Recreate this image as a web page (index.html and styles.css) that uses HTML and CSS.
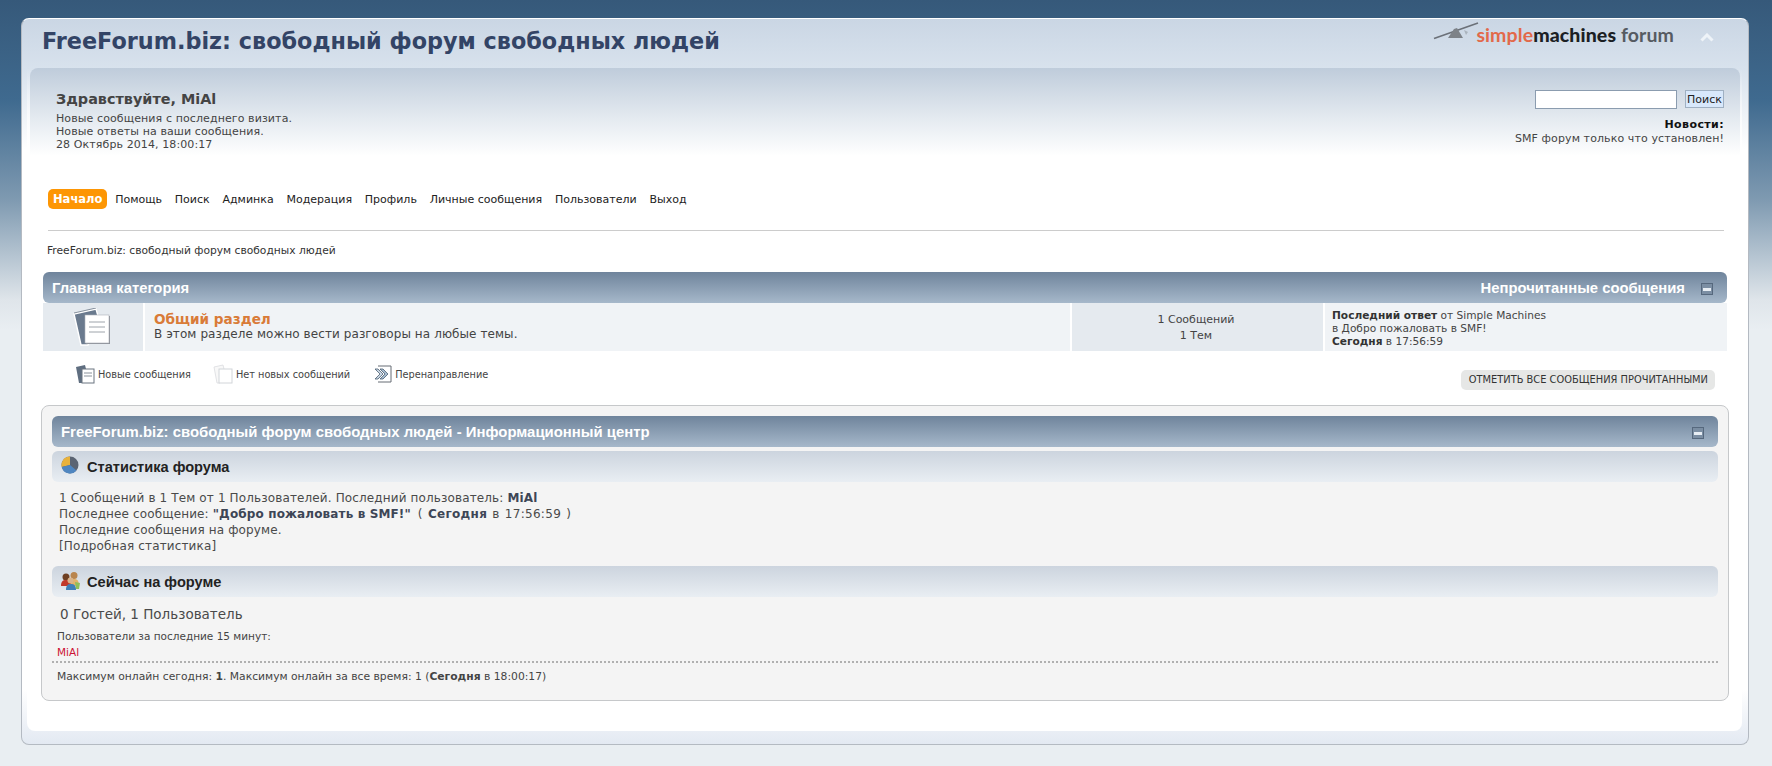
FILE: index.html
```html
<!DOCTYPE html>
<html lang="ru">
<head>
<meta charset="utf-8">
<title>FreeForum.biz</title>
<link rel="stylesheet" href="styles.css">
</head>
<body>
<div class="wrapper">
  <header class="top">
    <h1 class="site-title">FreeForum.biz: свободный форум свободных людей</h1>
    <div class="logo">
      <svg class="logo-mark" width="47" height="18" viewBox="0 0 47 18"><path d="M1 16.5 45 1" stroke="#6b7078" stroke-width="1.6" fill="none"/><path d="M15 16h15l-6-10-3 1z" fill="#7d8288"/><path d="M31 8l4 2-2 3z" fill="#aab3bd"/></svg>
      <span class="logo-text"><span class="l-simple">simple</span><span class="l-mach">machines</span> <span class="l-forum">forum</span></span>
      <svg class="chevron" width="14" height="9" viewBox="0 0 14 9"><path d="M1.5 7.5 7 2l5.500 5.500" stroke="#eef3f8" stroke-width="3" fill="none"/></svg>
    </div>
  </header>
  <main class="content">
    <section class="upper">
      <div class="upper-row">
        <div class="user">
          <h2 class="greet">Здравствуйте, MiAl</h2>
          <div>Новые сообщения с последнего визита.</div>
          <div>Новые ответы на ваши сообщения.</div>
          <div>28 Октябрь 2014, 18:00:17</div>
        </div>
        <div class="news">
          <form class="search">
            <input class="search-input" type="text">
            <button class="search-btn" type="button">Поиск</button>
          </form>
          <strong class="news-h">Новости:</strong>
          <div class="news-text">SMF форум только что установлен!</div>
        </div>
      </div>
      <nav class="nav">
        <a class="nav-item active">Начало</a>
        <a class="nav-item">Помощь</a>
        <a class="nav-item">Поиск</a>
        <a class="nav-item">Админка</a>
        <a class="nav-item">Модерация</a>
        <a class="nav-item">Профиль</a>
        <a class="nav-item">Личные сообщения</a>
        <a class="nav-item">Пользователи</a>
        <a class="nav-item">Выход</a>
      </nav>
    </section>
    <div class="crumbs">FreeForum.biz: свободный форум свободных людей</div>

    <div class="cat-bar">
      <span>Главная категория</span>
      <span class="cat-right">Непрочитанные сообщения
        <svg class="toggle" width="12" height="12" viewBox="0 0 12 12"><rect x=".5" y=".5" width="11" height="11" fill="#7b8ea3" stroke="#56687d"/><rect x="2" y="5" width="8" height="3" fill="#e8eef4"/></svg>
      </span>
    </div>
    <div class="board">
      <div class="b-icon">
        <svg width="38" height="38" viewBox="0 0 38 38"><path d="M1 6 23 1l2 7-10 29H8z" fill="#6a7a8e" stroke="#fff" stroke-width="1.4"/><path d="M1 6 23 1" stroke="#5a6778" fill="none" stroke-width=".7" transform="translate(0 -1)"/><rect x="13" y="8" width="24" height="28" fill="#8a8f96"/><rect x="12" y="7" width="24" height="28" fill="#fff" stroke="#aab0b7" stroke-width=".6"/><path d="M16 14h16M16 19h16M16 24h16" stroke="#9ea4ab" fill="none"/></svg>
      </div>
      <div class="b-main">
        <a class="b-title">Общий раздел</a>
        <div class="b-desc">В этом разделе можно вести разговоры на любые темы.</div>
      </div>
      <div class="b-stats">1 Сообщений<br>1 Тем</div>
      <div class="b-last"><b>Последний ответ</b> от Simple Machines<br>в Добро пожаловать в SMF!<br><b>Сегодня</b> в 17:56:59</div>
    </div>

    <div class="legend-row">
      <div class="legend">
        <span class="leg">
          <svg width="20" height="20" viewBox="0 0 20 20"><path d="M1 3 10 1l1 4-4 14H4z" fill="#5f6e80"/><rect x="7" y="5" width="12" height="14" fill="#fff" stroke="#6b7480"/><path d="M9 9h8M9 12h8" stroke="#8a929b"/></svg>
          Новые сообщения
        </span>
        <span class="leg">
          <svg width="20" height="20" viewBox="0 0 20 20"><path d="M1 3 10 1l1 4-4 14H4z" fill="#f8f8f8" stroke="#dadcdf" stroke-width=".8"/><rect x="6" y="5" width="13" height="14" fill="#fff" stroke="#d2d5d9"/></svg>
          Нет новых сообщений
        </span>
        <span class="leg leg-last">
          <svg width="18" height="18" viewBox="0 0 18 18"><path d="M4 1h13v16H4" fill="#fff" stroke="#666c74"/><path d="M1 4l5 5-5 5h3l5-5-5-5z" fill="#c9d6e2" stroke="#4d5f73" stroke-width=".8"/><path d="M6 4l5 5-5 5h3l5-5-5-5z" fill="#a7bccf" stroke="#4d5f73" stroke-width=".8"/></svg>
          Перенаправление
        </span>
      </div>
      <a class="mark-btn">ОТМЕТИТЬ ВСЕ СООБЩЕНИЯ ПРОЧИТАННЫМИ</a>
    </div>

    <section class="info">
      <div class="cat-bar info-bar">
        <span>FreeForum.biz: свободный форум свободных людей - Информационный центр</span>
        <svg class="toggle" width="12" height="12" viewBox="0 0 12 12"><rect x=".5" y=".5" width="11" height="11" fill="#7b8ea3" stroke="#56687d"/><rect x="2" y="5" width="8" height="3" fill="#e8eef4"/></svg>
      </div>
      <div class="sub-bar">
        <svg width="18" height="18" viewBox="0 0 18 18"><circle cx="9" cy="9" r="8.5" fill="#5b6472"/><path d="M9 9V.5A8.500 8.500 0 0 0 .7 11z" fill="#e9b23c"/><path d="M9 9 .7 11A8.500 8.500 0 0 0 15.500 14.500z" fill="#4f86c0"/></svg>
        <span>Статистика форума</span>
      </div>
      <div class="stats-text">
        1 Сообщений в 1 Тем от 1 Пользователей. Последний пользователь: <b>MiAl</b><br>
        Последнее сообщение: <b>"Добро пожаловать в SMF!"</b> <span class="lp-date">( <b>Сегодня</b> в 17:56:59 )</span><br>
        Последние сообщения на форуме.<br>
        [Подробная статистика]
      </div>
      <div class="sub-bar">
        <svg class="people" width="19" height="19" viewBox="0 0 19 19"><circle cx="13" cy="4.500" r="3.500" fill="#b9854e"/><path d="M8 15c0-6 2-7 5-7s5 1 5 7z" fill="#e3b26a"/><circle cx="5" cy="6" r="3.500" fill="#6e3f22"/><path d="M0 15c0-5 2-6 5-6s5 1 5 6z" fill="#c0392b"/><circle cx="9.500" cy="9.500" r="3" fill="#d9b48c"/><path d="M5 19c0-5 2-6 5-6s5 1 5 6z" fill="#3e7fb8"/><path d="M14 11l5 1-1 6h-3z" fill="#8fbf5a"/></svg>
        <span>Сейчас на форуме</span>
      </div>
      <div class="online-count">0 Гостей, 1 Пользователь</div>
      <div class="online-list">Пользователи за последние 15 минут:<br><a class="member">MiAl</a></div>
      <div class="online-max">Максимум онлайн сегодня: <b>1</b>. Максимум онлайн за все время: 1 (<b>Сегодня</b> в 18:00:17)</div>
    </section>
  </main>
</div>
</body>
</html>
```
FILE: styles.css
```css
* { box-sizing: border-box; }
html, body { height: 766px; overflow: hidden; }
body {
  margin: 0;
  padding: 18px 23px 0 21px;
  background: linear-gradient(#36597a 0, #3f6a8f 100px, #7f9ab1 200px, #dfe5ea 300px, #e9eef2 330px) #e9eef2;
  font-family: "DejaVu Sans", sans-serif;
  font-size: 11px;
  color: #444;
}
.wrapper {
  height: 727px;
  border: 1px solid #b4bac2;
  border-top-color: #fff;
  border-radius: 8px;
  background: linear-gradient(#cad6e4 0, #d8e2ed 50px, #fff 130px, #fff 670px, #e3e9f2 100%);
}
.top {
  height: 49px;
  padding: 0 34px 0 20px;
  display: flex;
  align-items: center;
  justify-content: space-between;
}
.site-title {
  margin: 0 0 5px;
  font-size: 22.33px;
  font-weight: 700;
  color: #334466;
}
.logo { display: flex; align-items: center; margin-bottom: 18px; }
.logo-mark { margin-right: -4px; margin-top: -8px; }
.logo-text { font-family: Lato, sans-serif; font-size: 19.5px; font-weight: 700; letter-spacing: .1px; }
.l-simple { color: #e2694a; }
.l-mach { color: #1c1f24; font-weight: 900; }
.l-forum { color: #565b62; }
.chevron { margin-left: 26px; margin-top: 6px; }
.content {
  height: 663px;
  margin: 0 6px 0 5px;
  border-radius: 0 0 8px 8px;
  background: linear-gradient(rgba(255,255,255,0), #fff 80px);
}
.upper {
  height: 163px;
  margin: 0 2px 0 3px;
  padding: 20px 16px 0 26px;
  border-radius: 8px 8px 0 0;
  background: linear-gradient(#bfccdb 0, #e4eaf0 50px, #fff 88px);
  line-height: 13px;
}
.upper-row { display: flex; justify-content: space-between; height: 101px; }
.user { letter-spacing: .1px; }
.greet { margin: 0 0 2px; font-size: 14.4px; line-height: 22px; font-weight: 700; color: #444; letter-spacing: 0; }
.news { text-align: right; margin-top: 1px; letter-spacing: .1px; }
.search { display: flex; justify-content: flex-end; align-items: center; gap: 8px; height: 20px; margin-bottom: 9px; }
.search-input { width: 142px; height: 19px; border: 1px solid #8b9caf; background: #fff; padding: 0; }
.search-btn {
  width: 39px; height: 18px; padding: 0;
  border: 1px solid #9fb0c2;
  background: #d8e8fb;
  font: 11px "DejaVu Sans", sans-serif;
  color: #222;
}
.news-h { color: #111; letter-spacing: .4px; }
.news-text { margin-top: 1px; }
.nav {
  display: flex;
  align-items: flex-start;
  height: 42px;
  margin: 0 0 0 -8px;
  gap: 12.8px;
  border-bottom: 1px solid #ccc;
}
.nav-item { color: #222; font-size: 11px; line-height: 22px; }
.nav-item.active {
  height: 20px;
  line-height: 20px;
  padding: 0 5px;
  margin-right: -5px;
  border-radius: 5px;
  background: #fd9604;
  color: #fff;
  font-weight: 700;
  font-size: 11.5px;
}
.crumbs { height: 41px; margin-left: 20px; padding-top: 13px; font-size: 10.7px; color: #333; }
.cat-bar {
  height: 31px;
  margin: 0 15px 0 16px;
  padding: 0 8px 0 9px;
  display: flex;
  align-items: center;
  justify-content: space-between;
  border-radius: 6px;
  background: linear-gradient(#6f849c, #a6b8ca);
  font: 700 14.8px "Liberation Sans", sans-serif;
  color: #fff;
}
.cat-right { display: flex; align-items: center; gap: 16px; }
.toggle { display: block; margin: 2px 6px 0 0; }
.board { display: grid; gap: 2px; height: 48px; margin: 0 15px 0 16px; grid-template-columns: 100px 925px 251px 1fr; grid-template-rows: 48px; line-height: 13px; font-size: 10.6px; }
.b-icon { background: #e5eaef; display: flex; justify-content: center; align-items: center; padding: 0 2px 0 0; }
.b-main { background: #f0f3f6; padding: 8px 9px 0; }
.b-title { display: block; font-size: 13.6px; font-weight: 700; line-height: 16px; color: #d97b38; }
.b-desc { font-size: 12px; line-height: 15px; color: #444; letter-spacing: .08px; }
.b-stats { background: #e5eaef; text-align: center; line-height: 16px; padding: 9px 3px 0 0; font-size: 11px; }
.b-last { background: #f0f3f6; padding: 6px 7px 0; }
.b-last b { color: #333; }
.legend-row { height: 54px; display: flex; justify-content: space-between; margin: 0 27px 0 48px; padding-top: 13px; }
.legend { display: flex; gap: 22px; font-size: 9.75px; height: 20px; }
.leg { display: flex; align-items: center; gap: 3px; }
.leg-last { margin-left: 2px; }
.mark-btn {
  height: 20px; line-height: 20px; padding: 0 7px 0 8px;
  margin-top: 6px;
  border-radius: 5px;
  background: #e6e7e6;
  font-size: 9.87px;
  color: #333;
}
.info {
  height: 296px;
  margin: 0 13px 0 14px;
  padding: 10px 10px 0;
  border: 1px solid #c6c8ca;
  border-radius: 8px;
  background: #f4f4f4;
}
.info-bar { margin: 0 0 4px; padding-right: 8px; font-size: 14.9px; }
.sub-bar {
  height: 31px;
  padding: 0 9px;
  display: flex;
  align-items: center;
  gap: 8px;
  border-radius: 6px;
  background: linear-gradient(#ccd4de, #e9eef3);
  font: 700 14.6px "Liberation Sans", sans-serif;
  color: #222;
}
.sub-bar svg { margin-top: -3px; }
.sub-bar .people { margin-right: -1px; }
.stats-text { height: 84px; padding: 8px 7px 0; font-size: 12px; line-height: 16px; letter-spacing: .13px; color: #4a4a4a; }
.stats-text b { color: #3d4656; }
.lp-date { margin-left: 3px; word-spacing: 1px; letter-spacing: .3px; }
.online-count { padding: 7px 8px 0; font-size: 13.5px; line-height: 20px; color: #4a4a4a; }
.online-list { padding: 4px 5px 0; line-height: 16px; height: 37px; font-size: 10.5px; }
.member { color: #cc1133; }
.online-max { padding: 6px 5px; border-top: 2px dotted #b0b0b0; line-height: 16px; font-size: 10.75px; }
```
